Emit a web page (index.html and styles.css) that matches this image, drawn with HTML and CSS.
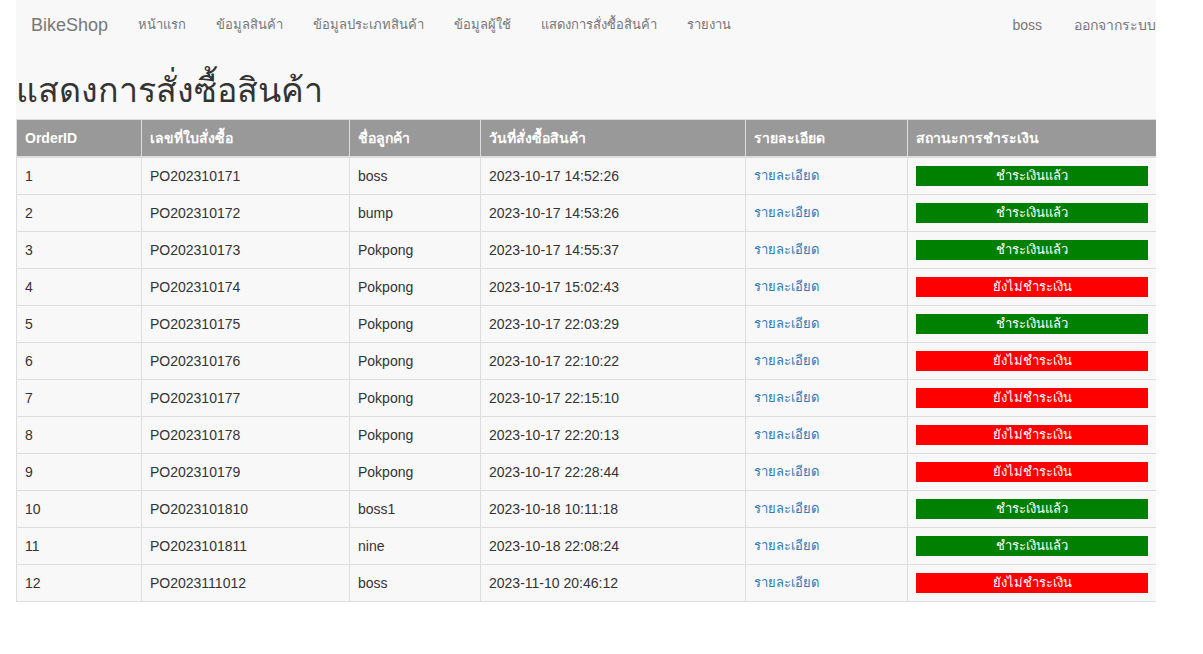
FILE: index.html
```html
<!DOCTYPE html>
<html lang="th">
<head>
<meta charset="utf-8">
<title>BikeShop</title>
<link rel="stylesheet" href="styles.css">
</head>
<body>
<div class="page">
  <nav class="navbar">
    <a class="brand" href="#">BikeShop</a>
    <ul class="nav nav-left">
      <li><a href="#">หน้าแรก</a></li>
      <li><a href="#">ข้อมูลสินค้า</a></li>
      <li><a href="#">ข้อมูลประเภทสินค้า</a></li>
      <li><a href="#">ข้อมูลผู้ใช้</a></li>
      <li><a href="#">แสดงการสั่งซื้อสินค้า</a></li>
      <li><a href="#">รายงาน</a></li>
    </ul>
    <ul class="nav nav-right">
      <li><a href="#">boss</a></li>
      <li><a class="logout" href="#">ออกจากระบบ</a></li>
    </ul>
  </nav>
  <h1 class="title">แสดงการสั่งซื้อสินค้า</h1>
  <table class="orders">
    <colgroup>
      <col class="c1"><col class="c2"><col class="c3"><col class="c4"><col class="c5"><col class="c6">
    </colgroup>
    <thead>
      <tr><th>OrderID</th><th>เลขที่ใบสั่งซื้อ</th><th>ชื่อลูกค้า</th><th>วันที่สั่งซื้อสินค้า</th><th>รายละเอียด</th><th>สถานะการชำระเงิน</th></tr>
    </thead>
    <tbody>
      <tr><td>1</td><td>PO202310171</td><td>boss</td><td>2023-10-17 14:52:26</td><td class="detail"><a href="#">รายละเอียด</a></td><td><div class="status paid">ชำระเงินแล้ว</div></td></tr>
      <tr><td>2</td><td>PO202310172</td><td>bump</td><td>2023-10-17 14:53:26</td><td class="detail"><a href="#">รายละเอียด</a></td><td><div class="status paid">ชำระเงินแล้ว</div></td></tr>
      <tr><td>3</td><td>PO202310173</td><td>Pokpong</td><td>2023-10-17 14:55:37</td><td class="detail"><a href="#">รายละเอียด</a></td><td><div class="status paid">ชำระเงินแล้ว</div></td></tr>
      <tr><td>4</td><td>PO202310174</td><td>Pokpong</td><td>2023-10-17 15:02:43</td><td class="detail"><a href="#">รายละเอียด</a></td><td><div class="status unpaid">ยังไม่ชำระเงิน</div></td></tr>
      <tr><td>5</td><td>PO202310175</td><td>Pokpong</td><td>2023-10-17 22:03:29</td><td class="detail"><a href="#">รายละเอียด</a></td><td><div class="status paid">ชำระเงินแล้ว</div></td></tr>
      <tr><td>6</td><td>PO202310176</td><td>Pokpong</td><td>2023-10-17 22:10:22</td><td class="detail"><a href="#">รายละเอียด</a></td><td><div class="status unpaid">ยังไม่ชำระเงิน</div></td></tr>
      <tr><td>7</td><td>PO202310177</td><td>Pokpong</td><td>2023-10-17 22:15:10</td><td class="detail"><a href="#">รายละเอียด</a></td><td><div class="status unpaid">ยังไม่ชำระเงิน</div></td></tr>
      <tr><td>8</td><td>PO202310178</td><td>Pokpong</td><td>2023-10-17 22:20:13</td><td class="detail"><a href="#">รายละเอียด</a></td><td><div class="status unpaid">ยังไม่ชำระเงิน</div></td></tr>
      <tr><td>9</td><td>PO202310179</td><td>Pokpong</td><td>2023-10-17 22:28:44</td><td class="detail"><a href="#">รายละเอียด</a></td><td><div class="status unpaid">ยังไม่ชำระเงิน</div></td></tr>
      <tr><td>10</td><td>PO2023101810</td><td>boss1</td><td>2023-10-18 10:11:18</td><td class="detail"><a href="#">รายละเอียด</a></td><td><div class="status paid">ชำระเงินแล้ว</div></td></tr>
      <tr><td>11</td><td>PO2023101811</td><td>nine</td><td>2023-10-18 22:08:24</td><td class="detail"><a href="#">รายละเอียด</a></td><td><div class="status paid">ชำระเงินแล้ว</div></td></tr>
      <tr><td>12</td><td>PO2023111012</td><td>boss</td><td>2023-11-10 20:46:12</td><td class="detail"><a href="#">รายละเอียด</a></td><td><div class="status unpaid">ยังไม่ชำระเงิน</div></td></tr>
    </tbody>
  </table>
</div>
</body>
</html>
```
FILE: styles.css
```css
* { box-sizing: border-box; }
html, body { margin: 0; padding: 0; background: #fff; }
body {
  font-family: "Liberation Sans", Arial, sans-serif;
  font-size: 14px;
  line-height: 1.42857;
  color: #333;
}
a { color: #337ab7; text-decoration: none; }
.page {
  width: 1140px;
  margin-left: 16px;
  background: #f8f8f8;
  overflow: hidden;
}
.navbar {
  display: flex;
  align-items: center;
  height: 50px;
  padding: 0 0 0 15px;
}
.brand {
  font-size: 18px;
  line-height: 20px;
  color: #777;
  padding: 15px 15px 15px 0;
}
.nav {
  display: flex;
  list-style: none;
  margin: 0;
  padding: 0;
}
.nav a {
  display: block;
  padding: 15px;
  line-height: 20px;
  color: #777;
  white-space: nowrap;
}
.nav-left a { font-size: 13px; }
.nav-right { margin-left: auto; margin-right: -15px; }
.nav .logout { padding-left: 17px; }
.title {
  font-size: 34px;
  font-weight: 500;
  line-height: 40px;
  height: 40px;
  margin: 20px 0 9px;
  color: #333;
}
.orders {
  width: 1140px;
  border-collapse: collapse;
  border: 1px solid #ddd;
  table-layout: fixed;
}
.c1 { width: 125px; }
.c2 { width: 208px; }
.c3 { width: 131px; }
.c4 { width: 265px; }
.c5 { width: 162px; }
.c6 { width: 249px; }
.orders th, .orders td {
  border: 1px solid #ddd;
  padding: 8px;
  text-align: left;
  vertical-align: top;
  line-height: 20px;
}
.orders th {
  background: #999;
  color: #fff;
  font-weight: bold;
  border-bottom: 2px solid #ddd;
}
.orders td.detail { font-size: 13px; }
.status {
  height: 20px;
  line-height: 20px;
  text-align: center;
  color: #fff;
  font-size: 13px;
  overflow: hidden;
}
.paid { background: #008000; }
.unpaid { background: #ff0000; }
```
